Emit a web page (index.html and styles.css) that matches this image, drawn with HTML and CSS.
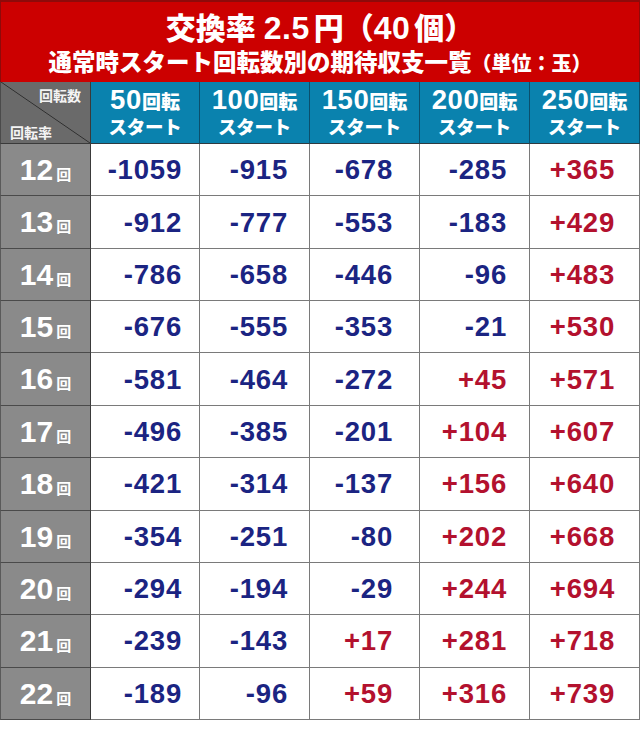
FILE: index.html
```html
<!DOCTYPE html>
<html lang="ja">
<head>
<meta charset="utf-8">
<link rel="stylesheet" href="styles.css">
</head>
<body>
<div class="page">
  <div class="title">
    <div class="t1">交換率<span class="sp"></span><span class="tn">2.5</span><span class="sp2"></span>円（<span class="tn">40</span><span class="sp2"></span>個）</div>
    <div class="t2">通常時スタート回転数別の期待収支一覧<span class="unit">（単位：玉）</span></div>
  </div>
  <div class="grid">
    <div class="corner"><span class="ctop">回転数</span><span class="cbot">回転率</span></div>
    <div class="head"><div class="h1"><span class="hn">50</span>回転</div><div class="h2">スタート</div></div>
    <div class="head"><div class="h1"><span class="hn">100</span>回転</div><div class="h2">スタート</div></div>
    <div class="head"><div class="h1"><span class="hn">150</span>回転</div><div class="h2">スタート</div></div>
    <div class="head"><div class="h1"><span class="hn">200</span>回転</div><div class="h2">スタート</div></div>
    <div class="head"><div class="h1"><span class="hn">250</span>回転</div><div class="h2">スタート</div></div>

    <div class="rate"><span class="rn">12</span><span class="rk">回</span></div>
    <div class="cell neg">-1059</div><div class="cell neg">-915</div><div class="cell neg">-678</div><div class="cell neg">-285</div><div class="cell pos">+365</div>

    <div class="rate"><span class="rn">13</span><span class="rk">回</span></div>
    <div class="cell neg">-912</div><div class="cell neg">-777</div><div class="cell neg">-553</div><div class="cell neg">-183</div><div class="cell pos">+429</div>

    <div class="rate"><span class="rn">14</span><span class="rk">回</span></div>
    <div class="cell neg">-786</div><div class="cell neg">-658</div><div class="cell neg">-446</div><div class="cell neg">-96</div><div class="cell pos">+483</div>

    <div class="rate"><span class="rn">15</span><span class="rk">回</span></div>
    <div class="cell neg">-676</div><div class="cell neg">-555</div><div class="cell neg">-353</div><div class="cell neg">-21</div><div class="cell pos">+530</div>

    <div class="rate"><span class="rn">16</span><span class="rk">回</span></div>
    <div class="cell neg">-581</div><div class="cell neg">-464</div><div class="cell neg">-272</div><div class="cell pos">+45</div><div class="cell pos">+571</div>

    <div class="rate"><span class="rn">17</span><span class="rk">回</span></div>
    <div class="cell neg">-496</div><div class="cell neg">-385</div><div class="cell neg">-201</div><div class="cell pos">+104</div><div class="cell pos">+607</div>

    <div class="rate"><span class="rn">18</span><span class="rk">回</span></div>
    <div class="cell neg">-421</div><div class="cell neg">-314</div><div class="cell neg">-137</div><div class="cell pos">+156</div><div class="cell pos">+640</div>

    <div class="rate"><span class="rn">19</span><span class="rk">回</span></div>
    <div class="cell neg">-354</div><div class="cell neg">-251</div><div class="cell neg">-80</div><div class="cell pos">+202</div><div class="cell pos">+668</div>

    <div class="rate"><span class="rn">20</span><span class="rk">回</span></div>
    <div class="cell neg">-294</div><div class="cell neg">-194</div><div class="cell neg">-29</div><div class="cell pos">+244</div><div class="cell pos">+694</div>

    <div class="rate"><span class="rn">21</span><span class="rk">回</span></div>
    <div class="cell neg">-239</div><div class="cell neg">-143</div><div class="cell pos">+17</div><div class="cell pos">+281</div><div class="cell pos">+718</div>

    <div class="rate"><span class="rn">22</span><span class="rk">回</span></div>
    <div class="cell neg">-189</div><div class="cell neg">-96</div><div class="cell pos">+59</div><div class="cell pos">+316</div><div class="cell pos">+739</div>
  </div>
</div>
</body>
</html>
```

FILE: styles.css
```css
html, body {
  margin: 0;
  padding: 0;
  background: #ffffff;
}
.page {
  width: 640px;
  font-family: "Noto Sans CJK JP", "Liberation Sans", sans-serif;
}
.title {
  height: 82px;
  box-sizing: border-box;
  background: #cc0000;
  border-top: 2px solid #8e0a0a;
  border-left: 1px solid #8e0a0a;
  border-right: 1px solid #8e0a0a;
  color: #ffffff;
  font-weight: 900;
  display: flex;
  flex-direction: column;
  align-items: center;
}
.t1 {
  font-size: 30px;
  line-height: 30px;
  height: 30px;
  margin-top: 9px;
  white-space: nowrap;
}
.tn {
  font-family: "Liberation Sans", Arial, sans-serif;
  font-weight: 700;
  font-size: 32px;
  line-height: 30px;
  letter-spacing: 0.5px;
}
.sp { display: inline-block; width: 8px; }
.sp2 { display: inline-block; width: 4px; }
.t2 {
  font-size: 23.5px;
  line-height: 26px;
  height: 26px;
  margin-top: 7px;
  white-space: nowrap;
}
.unit {
  font-size: 20px;
}
.grid {
  display: grid;
  grid-template-columns: 91px 109px 110px 110px 110px 110px;
  grid-template-rows: 62px repeat(11, 52.36px);
}
.corner {
  box-sizing: border-box;
  background-color: #6a6a6a;
  background-image: linear-gradient(to top right, transparent calc(50% - 0.8px), #2e2e2e 50%, transparent calc(50% + 0.8px));
  border-right: 1px solid #3a3a3a;
  border-bottom: 1px solid #3a3a3a;
  border-left: 1px solid #4a4a4a;
  color: #f4f4f4;
  font-size: 14px;
  font-weight: 700;
  display: flex;
  flex-direction: column;
  justify-content: space-between;
  padding: 4px 9px 2px 9px;
  line-height: 18px;
}
.ctop { align-self: flex-end; }
.cbot { align-self: flex-start; }
.head {
  box-sizing: border-box;
  background: #0a82ae;
  border-right: 1px solid #0b4f6c;
  border-bottom: 1px solid #2f3a40;
  color: #ffffff;
  font-weight: 900;
  display: flex;
  flex-direction: column;
  align-items: center;
  justify-content: center;
  padding-bottom: 2px;
}
.h1 {
  font-size: 19px;
  line-height: 28px;
  white-space: nowrap;
}
.hn {
  font-family: "Liberation Sans", Arial, sans-serif;
  font-weight: 700;
  font-size: 27.5px;
  letter-spacing: 0.6px;
}
.h2 {
  font-size: 18.5px;
  line-height: 22px;
  letter-spacing: -0.3px;
}
.rate {
  box-sizing: border-box;
  background: #8a8a8a;
  border-right: 1px solid #3a3a3a;
  border-bottom: 1px solid #4a4a4a;
  border-left: 1px solid #5a5a5a;
  color: #ffffff;
  display: flex;
  align-items: baseline;
  justify-content: center;
  padding-top: 9px;
  font-weight: 700;
}
.rn {
  font-family: "Liberation Sans", Arial, sans-serif;
  font-size: 30px;
  line-height: 34px;
}
.rk {
  font-size: 15px;
  margin-left: 3px;
}
.cell {
  box-sizing: border-box;
  border-right: 1px solid #7a7a7a;
  border-bottom: 1px solid #7a7a7a;
  font-family: "Liberation Sans", Arial, sans-serif;
  font-weight: 700;
  font-size: 27.5px;
  letter-spacing: 0.8px;
  display: flex;
  align-items: center;
  justify-content: flex-end;
  padding-top: 1px;
}
.neg { color: #1b2482; }
.pos { color: #b3112e; }
.grid > .cell:nth-child(6n+2) { padding-right: 17px; }
.grid > .cell:nth-child(6n+3) { padding-right: 21px; }
.grid > .cell:nth-child(6n+4) { padding-right: 26px; }
.grid > .cell:nth-child(6n+5) { padding-right: 22px; }
.grid > .cell:nth-child(6n) { padding-right: 24px; }
```
